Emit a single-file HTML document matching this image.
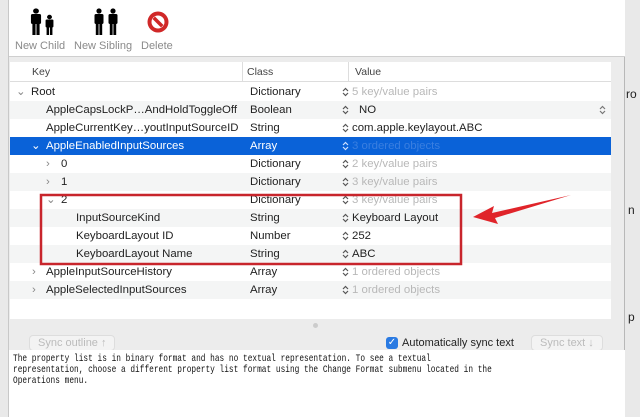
<!DOCTYPE html>
<html><head><style>
*{margin:0;padding:0;box-sizing:border-box}
body{width:640px;height:417px;overflow:hidden;background:#e9e9e9;font-family:"Liberation Sans",sans-serif;font-size:11.4px;color:#222;position:relative}
.win{position:absolute;left:8px;top:0;width:617px;height:417px;background:#ececec;border-left:1px solid #c8c8c8;border-right:1px solid #b8b8b8}
.tb{position:absolute;left:0;top:0;width:616px;height:57px;background:#fff;border-bottom:1px solid #cfcfcf}
.lbl{position:absolute;top:40px;font-size:11px;color:#8a8a8a}
.tbl{position:absolute;left:1px;top:62px;width:601px;height:257px;background:#fff}
.hdr{position:absolute;top:0;left:0;width:601px;height:20px;border-bottom:1px solid #ddd;font-size:10.5px;color:#444}
.row{position:absolute;left:0;width:601px;height:18px;line-height:18px}
.row span{position:absolute;white-space:nowrap}
.alt{background:#f4f5f5}
.sel{background:#0a62d8;color:#fff}
.g{color:#b8b8b8}
.ud{position:absolute;left:332px;top:4px;width:7px;height:10px}
.bot{position:absolute;left:0;top:350px;width:616px;height:67px;background:#fff;padding:4px 0 0 4px;color:#111}
.bot div{font-family:"Liberation Mono",monospace;font-size:10.5px;line-height:11px;transform:scaleX(0.745);transform-origin:0 0;white-space:nowrap}
.btn{position:absolute;top:335px;height:16px;border:1px solid #ddd;border-radius:4px;background:#f3f3f3;color:#bbb;font-size:11px;line-height:14px;padding:0 8px}
</style></head><body>
<svg width="0" height="0" style="position:absolute"><defs><symbol id="ud" viewBox="0 0 7 10"><path d="M1 4 L3.5 1.5 L6 4 M1 6 L3.5 8.5 L6 6" fill="none" stroke="currentColor" stroke-width="1.2"/></symbol></defs></svg>
<div style="position:absolute;left:626px;top:87px;font-size:12px">ro</div>
<div style="position:absolute;left:628px;top:203px;font-size:12px">n</div>
<div style="position:absolute;left:628px;top:310px;font-size:12px">p</div>
<div class="win">
 <div class="tb">
  <svg style="position:absolute;left:18px;top:8px" width="36" height="28" viewBox="0 0 32 28" preserveAspectRatio="none">
   <circle cx="8" cy="3" r="2.6"/><rect x="3.5" y="6" width="9" height="10" rx="1.5"/><rect x="4.8" y="14" width="2.8" height="13"/><rect x="8.4" y="14" width="2.8" height="13"/>
   <circle cx="20" cy="9" r="2.2"/><rect x="16.5" y="11.5" width="7" height="8" rx="1.2"/><rect x="17.4" y="18" width="2.2" height="9"/><rect x="20.4" y="18" width="2.2" height="9"/>
  </svg>
  <svg style="position:absolute;left:81px;top:8px" width="34" height="28" viewBox="0 0 32 28">
   <g><circle cx="8" cy="3" r="2.6"/><rect x="3.5" y="6" width="9" height="10" rx="1.5"/><rect x="4.8" y="14" width="2.8" height="13"/><rect x="8.4" y="14" width="2.8" height="13"/></g>
   <g transform="translate(14,0)"><circle cx="8" cy="3" r="2.6"/><rect x="3.5" y="6" width="9" height="10" rx="1.5"/><rect x="4.8" y="14" width="2.8" height="13"/><rect x="8.4" y="14" width="2.8" height="13"/></g>
  </svg>
  <svg style="position:absolute;left:137px;top:10px" width="24" height="24" viewBox="0 0 24 24">
   <circle cx="12" cy="12" r="10.5" fill="#d02828"/><circle cx="12" cy="12" r="6.5" fill="#fff"/><path d="M6.5 9 L15 17.5 L17.5 15 L9 6.5Z" fill="#d02828"/>
  </svg>
  <div class="lbl" style="left:6px">New Child</div>
  <div class="lbl" style="left:65px">New Sibling</div>
  <div class="lbl" style="left:132px">Delete</div>
 </div>
 <div class="tbl">
  <div class="hdr"><span style="position:absolute;left:22px;top:4px">Key</span><span style="position:absolute;left:232px;top:0;height:20px;border-left:1px solid #ddd"></span><span style="position:absolute;left:237px;top:4px">Class</span><span style="position:absolute;left:338px;top:0;height:20px;border-left:1px solid #ddd"></span><span style="position:absolute;left:345px;top:4px">Value</span></div>
  <div class="row" style="top:21px"><span style="left:6px;color:#888">⌄</span><span style="left:21px">Root</span><span style="left:240px">Dictionary</span><svg class="ud" style="color:#555"><use href="#ud"/></svg><span class="g" style="left:342px">5 key/value pairs</span></div>
  <div class="row alt" style="top:39px"><span style="left:36px">AppleCapsLockP…AndHoldToggleOff</span><span style="left:240px">Boolean</span><svg class="ud" style="color:#555"><use href="#ud"/></svg><span style="left:349px">NO</span><svg class="ud" style="left:589px;color:#777"><use href="#ud"/></svg></div>
  <div class="row" style="top:57px"><span style="left:36px">AppleCurrentKey…youtInputSourceID</span><span style="left:240px">String</span><svg class="ud" style="color:#555"><use href="#ud"/></svg><span style="left:342px">com.apple.keylayout.ABC</span></div>
  <div class="row sel" style="top:75px"><span style="left:21px">⌄</span><span style="left:36px">AppleEnabledInputSources</span><span style="left:240px">Array</span><svg class="ud" style="color:#cfe0ff"><use href="#ud"/></svg><span style="left:342px;color:#3a7fe0">3 ordered objects</span></div>
  <div class="row" style="top:93px"><span style="left:36px;color:#888">›</span><span style="left:51px">0</span><span style="left:240px">Dictionary</span><svg class="ud" style="color:#555"><use href="#ud"/></svg><span class="g" style="left:342px">2 key/value pairs</span></div>
  <div class="row alt" style="top:111px"><span style="left:36px;color:#888">›</span><span style="left:51px">1</span><span style="left:240px">Dictionary</span><svg class="ud" style="color:#555"><use href="#ud"/></svg><span class="g" style="left:342px">3 key/value pairs</span></div>
  <div class="row" style="top:129px"><span style="left:36px;color:#888">⌄</span><span style="left:51px">2</span><span style="left:240px">Dictionary</span><svg class="ud" style="color:#555"><use href="#ud"/></svg><span class="g" style="left:342px">3 key/value pairs</span></div>
  <div class="row alt" style="top:147px"><span style="left:66px">InputSourceKind</span><span style="left:240px">String</span><svg class="ud" style="color:#555"><use href="#ud"/></svg><span style="left:342px">Keyboard Layout</span></div>
  <div class="row" style="top:165px"><span style="left:66px">KeyboardLayout ID</span><span style="left:240px">Number</span><svg class="ud" style="color:#555"><use href="#ud"/></svg><span style="left:342px">252</span></div>
  <div class="row alt" style="top:183px"><span style="left:66px">KeyboardLayout Name</span><span style="left:240px">String</span><svg class="ud" style="color:#555"><use href="#ud"/></svg><span style="left:342px">ABC</span></div>
  <div class="row" style="top:201px"><span style="left:22px;color:#888">›</span><span style="left:36px">AppleInputSourceHistory</span><span style="left:240px">Array</span><svg class="ud" style="color:#555"><use href="#ud"/></svg><span class="g" style="left:342px">1 ordered objects</span></div>
  <div class="row alt" style="top:219px"><span style="left:22px;color:#888">›</span><span style="left:36px">AppleSelectedInputSources</span><span style="left:240px">Array</span><svg class="ud" style="color:#555"><use href="#ud"/></svg><span class="g" style="left:342px">1 ordered objects</span></div>
 </div>
 <div style="position:absolute;left:304px;top:323px;width:5px;height:5px;border-radius:50%;background:#ccc"></div>
 <div class="btn" style="left:20px">Sync outline ↑</div>
 <div style="position:absolute;left:377px;top:337px;width:12px;height:12px;border-radius:3px;background:#2a7ae2;color:#fff;font-size:10px;line-height:12px;text-align:center">✓</div>
 <div style="position:absolute;left:393px;top:337px;font-size:11px">Automatically sync text</div>
 <div class="btn" style="left:522px">Sync text ↓</div>
 <div class="bot"><div>The property list is in binary format and has no textual representation.  To see a textual<br>representation, choose a different property list format using the Change Format submenu located in the<br>Operations menu.</div></div>
</div>
<svg style="position:absolute;left:0;top:0" width="640" height="417">
 <rect x="41" y="195" width="420" height="69" fill="none" stroke="#c8252c" stroke-width="2.5"/>
 <path d="M571 195 L492 213 L494 206 L473 217 L498 224 L495 218 Z" fill="#e0242a"/>
</svg>
</body></html>
